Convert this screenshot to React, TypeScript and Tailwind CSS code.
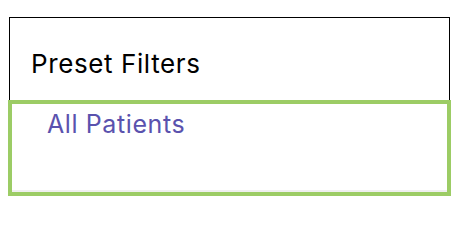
export default function App() {
  return (
    <div className="w-[464px] h-[208px] bg-white pt-[17px] pl-[8px] font-['Inter',sans-serif]">
      <div className="w-[443px]">
        <div className="ml-[1px] w-[441px] h-[83px] border border-b-0 border-black pl-[21px] pt-[31px]">
          <h2 className="text-[26px] leading-[30px] tracking-[0.6px] text-black">Preset Filters</h2>
        </div>
        <div className="h-[96px] border-4 border-[#9ccc65]">
          <ul className="h-full border-b-2 border-[#efefef] pl-[35px] pt-[6px]">
            <li className="text-[25px] leading-[28px] tracking-[0.6px] text-[#5a52ae]">All Patients</li>
          </ul>
        </div>
      </div>
    </div>
  );
}
